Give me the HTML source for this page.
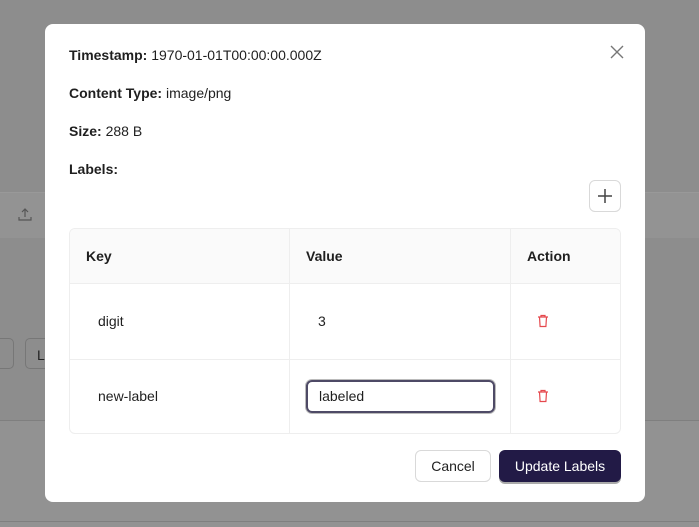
<!DOCTYPE html>
<html><head><style>
*{box-sizing:border-box;margin:0;padding:0}
body{width:699px;height:527px;overflow:hidden;background:#8d8d8d;font-family:"Liberation Sans",sans-serif;font-size:14px;color:#1f1f1f;position:relative}
.a{position:absolute}
.m{left:45px;top:24px;width:600px;height:478px;background:#fff;border-radius:8px}
.t{left:69px;top:228px;width:552px;height:206px;border:1px solid #eee;border-radius:6px;overflow:hidden}
b{font-weight:bold}
</style></head><body>
<div class="a" style="left:0;top:192px;width:699px;height:1px;background:#999"></div>
<div class="a" style="left:0;top:193px;width:699px;height:45px;background:#939393"></div>
<div class="a" style="left:0;top:420px;width:699px;height:1px;background:#7f7f7f"></div>
<div class="a" style="left:0;top:421px;width:699px;height:106px;background:#929292"></div>
<div class="a" style="left:0;top:521px;width:699px;height:1px;background:#7f7f7f"></div>
<svg class="a" style="left:17px;top:207px" width="16" height="16" viewBox="0 0 16 16" fill="none" stroke="#555" stroke-width="1.2"><path d="M8 2v8M5 5l3-3 3 3M2 10v3h12v-3"/></svg>
<div class="a" style="left:-10px;top:338px;width:24px;height:31px;border:1px solid #777;border-radius:5px"></div>
<div class="a" style="left:25px;top:338px;width:40px;height:31px;border:1px solid #777;border-radius:5px;padding:8px 0 0 11px;color:#222">L</div>
<div class="a m"></div>
<svg class="a" style="left:609px;top:44px" width="16" height="16" viewBox="0 0 16 16" stroke="#777" stroke-width="1.4"><path d="M2 2l12 12M14 2L2 14"/></svg>
<div class="a" style="left:69px;top:47px"><b>Timestamp:</b> 1970-01-01T00:00:00.000Z</div>
<div class="a" style="left:69px;top:85px"><b>Content Type:</b> image/png</div>
<div class="a" style="left:69px;top:123px"><b>Size:</b> 288 B</div>
<div class="a" style="left:69px;top:161px"><b>Labels:</b></div>
<div class="a" style="left:589px;top:180px;width:32px;height:32px;border:1px solid #d9d9d9;border-radius:6px"></div>
<svg class="a" style="left:597px;top:188px" width="16" height="16" viewBox="0 0 16 16" stroke="#444" stroke-width="1.5"><path d="M8 1v14M1 8h14"/></svg>
<div class="a t">
<div class="a" style="left:0;top:0;width:552px;height:55px;background:#fafafa;border-bottom:1px solid #eee"></div>
<div class="a" style="left:0;top:130px;width:552px;height:1px;background:#eee"></div>
<div class="a" style="left:219px;top:0;width:1px;height:206px;background:#eee"></div>
<div class="a" style="left:440px;top:0;width:1px;height:206px;background:#eee"></div>
<b class="a" style="left:16px;top:19px">Key</b>
<b class="a" style="left:236px;top:19px">Value</b>
<b class="a" style="left:457px;top:19px">Action</b>
<div class="a" style="left:28px;top:84px">digit</div>
<div class="a" style="left:248px;top:84px">3</div>
<div class="a" style="left:28px;top:159px">new-label</div>
<div class="a" style="left:236px;top:151px;width:189px;height:33px;border:2px solid #4e4a66;border-radius:6px;padding:6px 0 0 11px;box-shadow:0 0 0 1px #bbb">labeled</div>
<svg class="a" style="left:466px;top:85px" width="14" height="14" viewBox="0 0 14 14" fill="none" stroke="#e5484d" stroke-width="1.2"><path d="M2 3h10M5 3V1.5h4V3M3.5 3l.6 9.5h5.8L10.5 3"/></svg>
<svg class="a" style="left:466px;top:160px" width="14" height="14" viewBox="0 0 14 14" fill="none" stroke="#e5484d" stroke-width="1.2"><path d="M2 3h10M5 3V1.5h4V3M3.5 3l.6 9.5h5.8L10.5 3"/></svg>
</div>
<div class="a" style="left:415px;top:450px;width:76px;height:32px;border:1px solid #d9d9d9;border-radius:6px;text-align:center;line-height:30px">Cancel</div>
<div class="a" style="left:499px;top:450px;width:122px;height:32px;background:#221a46;color:#fff;border-radius:6px;text-align:center;line-height:32px;box-shadow:0 2px 0 #aaa">Update Labels</div>
</body></html>
